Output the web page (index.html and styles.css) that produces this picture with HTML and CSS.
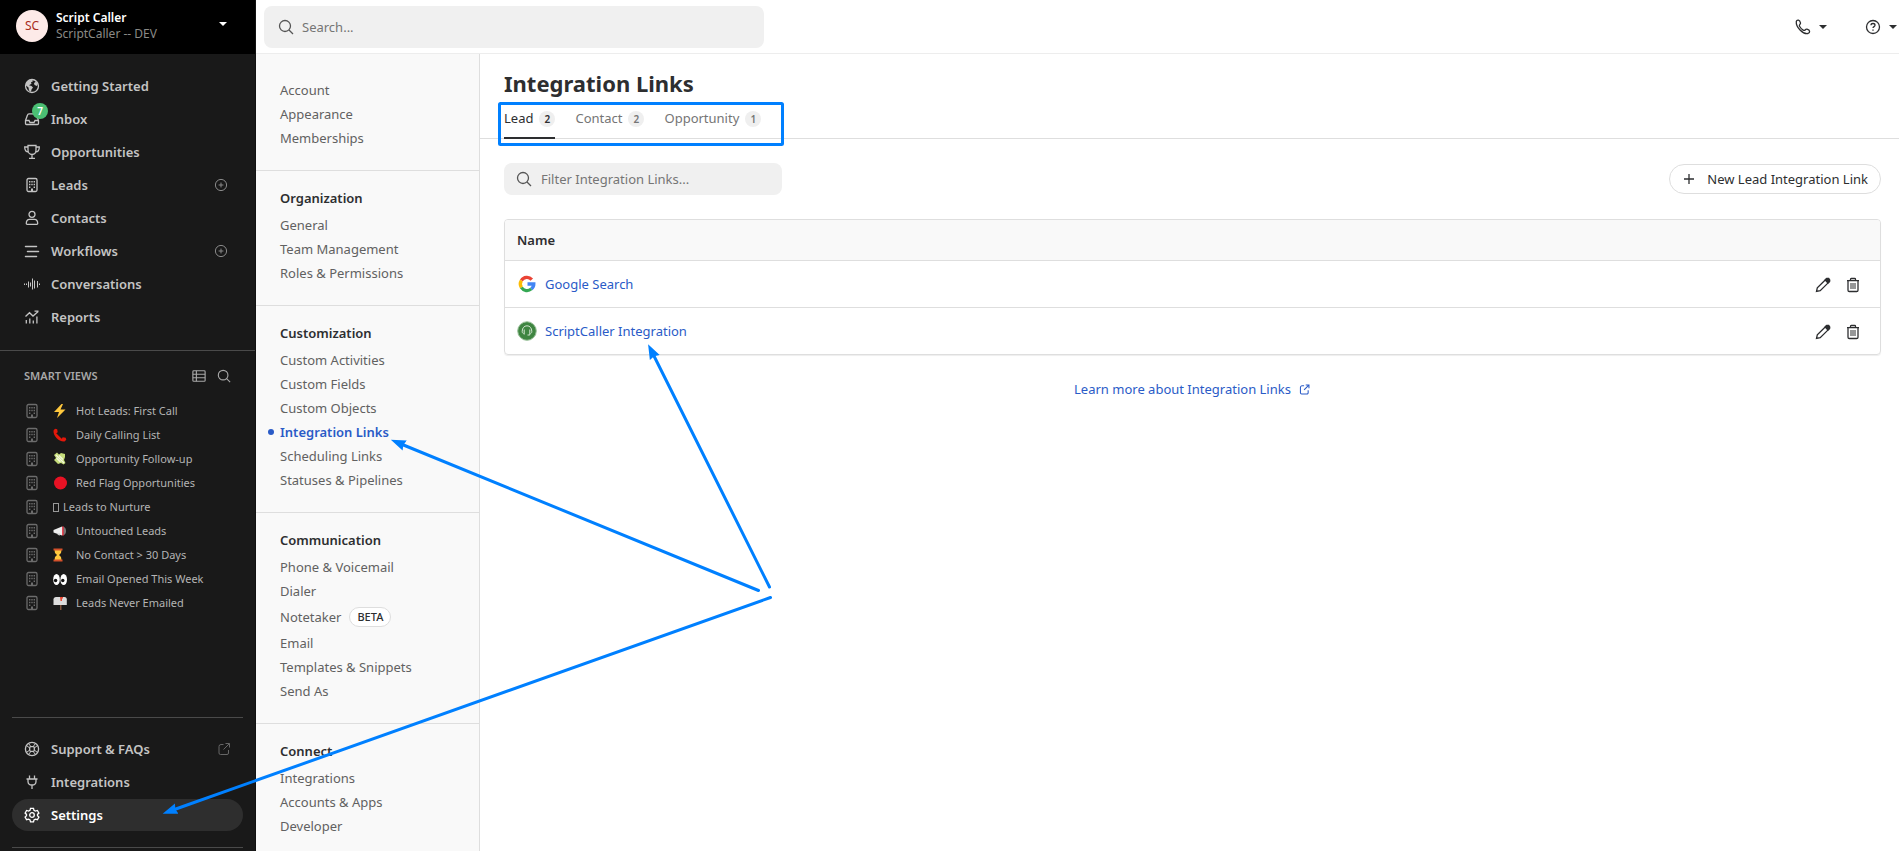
FILE: index.html
```html
<!DOCTYPE html>
<html lang="en">
<head>
    <meta charset="UTF-8">
    <meta name="viewport" content="width=device-width, initial-scale=1.0">
    <title>Integration Links</title>
    <link rel="stylesheet" href="styles.css">
</head>
<body>
    <!-- shared icons -->
    <svg class="sprite" aria-hidden="true">
        <symbol id="i-building" viewBox="0 0 16 16">
            <rect x="3" y="1.5" width="10" height="13" rx="1.5"/>
            <path d="M5 4h1.400v1.400H5zM7.300 4h1.400v1.400H7.300zM9.600 4H11v1.400H9.600zM5 6.800h1.400v1.400H5zM7.300 6.800h1.400v1.400H7.300zM9.600 6.800H11v1.400H9.600zM5 9.600h1.400V11H5zM9.600 9.600H11V11H9.600zM7 11.500h2v3H7z" fill="currentColor" stroke="none"/>
        </symbol>
        <symbol id="i-search" viewBox="0 0 16 16">
            <circle cx="7" cy="7" r="5.5"/>
            <path d="M11 11l4 4"/>
        </symbol>
        <symbol id="i-plus-circle" viewBox="0 0 16 16">
            <circle cx="8" cy="8" r="5.600"/>
            <path d="M8 5.600v4.800M5.600 8h4.800"/>
        </symbol>
        <symbol id="i-external" viewBox="0 0 16 16">
            <path d="M7.500 3.500H5a2 2 0 0 0-2 2V12a1.500 1.500 0 0 0 1.500 1.500H11a1.500 1.500 0 0 0 1.500-1.500V9M9.500 2.500h4v4M13.300 2.700L7.500 8.500"/>
        </symbol>
        <symbol id="i-pencil" viewBox="0 0 16 16">
            <path d="M1.500 14.500l.8-3.600L11 2.200a1.600 1.600 0 0 1 2.300 0l.6.6a1.600 1.600 0 0 1 0 2.300L5.200 13.700z"/>
            <path d="M10.200 3l1.500-1.500h2L14.700 3v1.300L13 6z" fill="currentColor"/>
        </symbol>
        <symbol id="i-trash" viewBox="0 0 16 16">
            <path d="M2 3.700h12M5.500 3.500V2.300c0-.5.300-.8.800-.8h3.400c.5 0 .8.300.8.800v1.200M3 4v9.200c0 .8.500 1.300 1.300 1.300h7.400c.8 0 1.300-.5 1.300-1.300V4"/>
            <path d="M6 6v6M8 6v6M10 6v6" stroke-width="1"/>
        </symbol>
    </svg>

    <div class="app">
        <aside class="sidebar">
            <button class="account" type="button">
                <span class="avatar">SC</span>
                <span class="account-text">
                    <strong>Script Caller</strong>
                    <span>ScriptCaller -- DEV</span>
                </span>
                <span class="caret"></span>
            </button>

            <nav class="main-nav">
                <a href="#"><svg class="icon" viewBox="0 0 16 16"><circle cx="8" cy="8" r="6.500"/><path d="M2 5l2.500-2.500L8 1.700l1 1.500-2 1 .5 1.500-2.500 1.500 2.500.8 1.500 1.500-1.500 2-.5 2.500-2-1.500-.5-3L2 7.500zM11 2.500l3 3-1 2.500-2.500-1-.5-2 1.500-1z" fill="currentColor" stroke="none"/></svg>Getting Started</a>
                <a href="#"><span class="icon-wrap"><svg class="icon" viewBox="0 0 16 16"><path d="M1.500 9.500L3.500 4c.2-.8.600-1.200 1.500-1.200h6c.8 0 1.200.4 1.500 1.200l2 5.500v3c0 .6-.4 1-1 1h-11c-.6 0-1-.4-1-1zM1.500 9.500h3.500l1 2h4l1-2h3.500"/></svg><span class="badge">7</span></span>Inbox</a>
                <a href="#"><svg class="icon" viewBox="0 0 16 16"><path d="M4 1.500h8v4.500c0 2.500-1.500 4.500-4 4.500S4 8.500 4 6zM8 10.500v3.500M5 14.300h6M4 3H.7c0 3 1.300 5 3.800 5M12 3h3.300c0 3-1.300 5-3.800 5"/></svg>Opportunities</a>
                <a href="#"><svg class="icon"><use href="#i-building"/></svg>Leads<svg class="icon end"><use href="#i-plus-circle"/></svg></a>
                <a href="#"><svg class="icon" viewBox="0 0 16 16"><circle cx="8" cy="4.300" r="3"/><path d="M2.300 13.500c0-2.500 1.200-4.200 3.200-4.200h5c2 0 3.200 1.700 3.200 4.200 0 .5-.3.800-.8.800H3.100c-.5 0-.8-.3-.8-.8z"/></svg>Contacts</a>
                <a href="#"><svg class="icon" viewBox="0 0 16 16"><path d="M1.500 3.500h11M3.500 8.500h11M1.500 13.500h11" stroke-width="1.500" stroke-linecap="round"/></svg>Workflows<svg class="icon end"><use href="#i-plus-circle"/></svg></a>
                <a href="#"><svg class="icon" viewBox="0 0 16 16"><path d="M.5 7.500v1.500M2.500 7.500v1.500M4.500 5.500v6M6.500 6.500v4M8.500 2.500v11M10.500 4.500v8M13.500 5v6.500M15.500 7.500v1.500" stroke-width="1"/></svg>Conversations</a>
                <a href="#"><svg class="icon" viewBox="0 0 16 16"><path d="M2.300 14.500v-3.500M5.800 14.500V9.500M9.300 14.500v-3M12.900 14.500V7.500M1.500 7.500l4-3.800 3.500 3.300 5.200-4.500M10.500 2.200h4"/></svg>Reports</a>
            </nav>

            <section class="smart-views">
                <header>
                    <h2>SMART VIEWS</h2>
                    <svg class="icon" viewBox="0 0 16 16"><rect x="1" y="2" width="14" height="12" rx="1"/><path d="M1 6h14M1 10h14M5 2v12"/></svg>
                    <svg class="icon"><use href="#i-search"/></svg>
                </header>
                <a href="#"><svg class="icon"><use href="#i-building"/></svg><svg class="emoji" viewBox="0 0 14 14"><path d="M8.500 0L1 8h5l-2 6L12.500 5.500h-5L10 0z" fill="#ffc83d"/></svg>Hot Leads: First Call</a>
                <a href="#"><svg class="icon"><use href="#i-building"/></svg><svg class="emoji" viewBox="0 0 14 14"><path d="M2 .8l2.200.5.500 3-1.500 1L8.700 10.800l1-1.500 3 .5.600 2-1.800 1.700C6 14 0 8 .5 2.500z" fill="#e3170a"/></svg>Daily Calling List</a>
                <a href="#"><svg class="icon"><use href="#i-building"/></svg><svg class="emoji" viewBox="0 0 14 14"><path d="M1 3l3-2.500 2 2L8 1l4 1v3l-1 3 1.500 3-2 1.500L8 11l-3 1-4-4 2-2z" fill="#c5dc7a"/><path d="M3 3l8 8M6 3.500l4 4M3.500 6l4 4" stroke="#f4f8df" stroke-width="1.200"/></svg>Opportunity Follow-up</a>
                <a href="#"><svg class="icon"><use href="#i-building"/></svg><svg class="emoji" viewBox="0 0 14 14"><circle cx="7.500" cy="7" r="6.500" fill="#e81224"/></svg>Red Flag Opportunities</a>
                <a href="#"><svg class="icon"><use href="#i-building"/></svg><span class="tofu"></span>Leads to Nurture</a>
                <a href="#"><svg class="icon"><use href="#i-building"/></svg><svg class="emoji" viewBox="0 0 14 14"><path d="M.5 6L9 2.500v9L.5 8.500z" fill="#eee"/><path d="M4 9.500h3v2L5 11z" fill="#ccc"/><path d="M9 2.500h1.800v9H9z" fill="#e84855"/><path d="M10.800 3c3 1 3 7 0 8z" fill="#777"/></svg>Untouched Leads</a>
                <a href="#"><svg class="icon"><use href="#i-building"/></svg><svg class="emoji" viewBox="0 0 14 14"><path d="M1.500 2h7L8 5 6 7l2 2 .5 3h-7L2 9l2-2-2-2z" fill="#ffc83d"/><path d="M.5.500h9v2h-9zM.5 11.500h9v2h-9z" fill="#d4512b"/></svg>No Contact &gt; 30 Days</a>
                <a href="#"><svg class="icon"><use href="#i-building"/></svg><svg class="emoji" viewBox="0 0 14 14"><ellipse cx="3.500" cy="7.500" rx="3.300" ry="5.500" fill="#fff"/><ellipse cx="10.700" cy="7.500" rx="3.300" ry="5.500" fill="#fff"/><circle cx="2.600" cy="8.500" r="1.700" fill="#111"/><circle cx="9.800" cy="8.500" r="1.700" fill="#111"/></svg>Email Opened This Week</a>
                <a href="#"><svg class="icon"><use href="#i-building"/></svg><svg class="emoji" viewBox="0 0 14 14"><path d="M.5 3.500C.5 2 1.500 1 3 1h8.500c1.500 0 2.300 1 2.300 2.500V9H.5z" fill="#ddd"/><path d="M7 9h1.500v5H7z" fill="#80533b"/><path d="M7 1h3v1.500H9V5H7.500z" fill="#e84a35"/></svg>Leads Never Emailed</a>
            </section>

            <nav class="main-nav bottom-nav">
                <a href="#"><svg class="icon" viewBox="0 0 16 16"><circle cx="8" cy="8" r="6.600"/><rect x="5.700" y="5.700" width="4.600" height="4.600" rx="1"/><path d="M2.800 4.800L5.800 7M4.800 2.800L7 5.800M13.200 4.800L10.200 7M11.200 2.800L9 5.800M2.800 11.200L5.800 9M4.800 13.200L7 10.200M13.200 11.200L10.200 9M11.200 13.200L9 10.200" stroke-width="1"/></svg>Support &amp; FAQs<svg class="icon end dim"><use href="#i-external"/></svg></a>
                <a href="#"><svg class="icon" viewBox="0 0 16 16"><path d="M5.500 1.500v3.500M10.500 1.500v3.500M2.500 5h11M4 5v2.500C4 10 5.500 11 8 11s4-1 4-3.500V5M8 11v4"/></svg>Integrations</a>
                <a href="#" class="active"><svg class="icon" viewBox="0 0 16 16"><path d="M6.500 1.300h3l.5 2 1.400.8 2-.6 1.500 2.600-1.400 1.300v1.400l1.400 1.300-1.500 2.600-2-.6-1.400.8-.5 2h-3l-.5-2-1.400-.8-2 .6-1.500-2.600 1.400-1.300V7.400L1.100 6.100l1.500-2.600 2 .6L6 3.300z"/><circle cx="8" cy="8" r="2.300"/></svg>Settings</a>
            </nav>
        </aside>

        <div class="page">
            <header class="topbar">
                <label class="search-box">
                    <svg class="icon"><use href="#i-search"/></svg>
                    <input type="text" placeholder="Search..." aria-label="Search">
                </label>
                <div class="top-actions">
                    <button type="button" aria-label="Phone"><svg class="icon" viewBox="0 0 16 16"><path d="M1.300 2.500C1.500 1.700 2.500 1 3.500 1.200c1 .2 1.700 1.500 2 2.600.2.900-.2 1.300-.8 1.800-.6.600-.4 1.200 0 1.900.8 1.400 2 2.700 3.500 3.600.7.400 1.400.5 1.900-.1.600-.7 1-1 1.900-.8 1.100.3 2.500 1 2.600 2 .1 1.100-.7 2-1.600 2.300C8 15.500.7 8 1.300 2.500z"/></svg><span class="caret"></span></button>
                    <button type="button" aria-label="Help"><svg class="icon" viewBox="0 0 16 16"><circle cx="8" cy="8" r="6.500"/><path d="M6 6.300c0-1.200.8-1.800 2-1.800s2 .7 2 1.700c0 1.400-2 1.400-2 2.800M8 10.500v1.300"/></svg><span class="caret"></span></button>
                </div>
            </header>

            <div class="body">
                <nav class="settings-nav">
                    <section>
                        <a href="#">Account</a>
                        <a href="#">Appearance</a>
                        <a href="#">Memberships</a>
                    </section>
                    <section>
                        <h3>Organization</h3>
                        <a href="#">General</a>
                        <a href="#">Team Management</a>
                        <a href="#">Roles &amp; Permissions</a>
                    </section>
                    <section>
                        <h3>Customization</h3>
                        <a href="#">Custom Activities</a>
                        <a href="#">Custom Fields</a>
                        <a href="#">Custom Objects</a>
                        <a href="#" class="active">Integration Links</a>
                        <a href="#">Scheduling Links</a>
                        <a href="#">Statuses &amp; Pipelines</a>
                    </section>
                    <section>
                        <h3>Communication</h3>
                        <a href="#">Phone &amp; Voicemail</a>
                        <a href="#">Dialer</a>
                        <a href="#" class="with-tag">Notetaker <span class="tag">BETA</span></a>
                        <a href="#">Email</a>
                        <a href="#">Templates &amp; Snippets</a>
                        <a href="#">Send As</a>
                    </section>
                    <section>
                        <h3>Connect</h3>
                        <a href="#">Integrations</a>
                        <a href="#">Accounts &amp; Apps</a>
                        <a href="#">Developer</a>
                    </section>
                </nav>

                <main>
                    <div class="heading">
                        <h1>Integration Links</h1>
                        <div class="tabs">
                            <a href="#" class="active">Lead <span>2</span></a>
                            <a href="#">Contact <span>2</span></a>
                            <a href="#">Opportunity <span>1</span></a>
                        </div>
                    </div>

                    <div class="content">
                        <div class="toolbar">
                            <label class="filter-box">
                                <svg class="icon"><use href="#i-search"/></svg>
                                <input type="text" placeholder="Filter Integration Links..." aria-label="Filter Integration Links">
                            </label>
                            <button type="button" class="new-btn"><svg class="icon" viewBox="0 0 16 16"><path d="M8 3v10M3 8h10"/></svg>New Lead Integration Link</button>
                        </div>

                        <div class="table-box">
                            <table>
                                <thead>
                                    <tr><th colspan="2">Name</th></tr>
                                </thead>
                                <tbody>
                                    <tr>
                                        <td><a href="#"><svg class="logo" viewBox="0 0 20 20"><g fill="none" stroke-width="3.300"><path d="M4.400 6.500A6.500 6.500 0 0 1 14.800 5.600" stroke="#ea4335"/><path d="M4.400 13.500A6.500 6.500 0 0 1 4.400 6.500" stroke="#fbbc05"/><path d="M14.300 14.900A6.500 6.500 0 0 1 4.400 13.500" stroke="#34a853"/><path d="M10.500 10h6.300c0 2-.9 3.800-2.500 4.900" stroke="#4285f4"/></g></svg>Google Search</a></td>
                                        <td class="actions">
                                            <button type="button" aria-label="Edit"><svg class="icon"><use href="#i-pencil"/></svg></button>
                                            <button type="button" aria-label="Delete"><svg class="icon"><use href="#i-trash"/></svg></button>
                                        </td>
                                    </tr>
                                    <tr>
                                        <td><a href="#"><svg class="logo" viewBox="0 0 20 20"><circle cx="10" cy="10" r="9.300" fill="#3f8541" stroke="#9cc29c"/><path d="M6.500 12.500c-.9-.2-1.300-.9-1.300-2.200C5.200 7 7.200 4.800 10 4.800s4.800 2.200 4.800 5.500c0 1.300-.4 2-1.300 2.200M7.200 8.500v5M12.800 8.500v5.500H10.500" fill="none" stroke="#d5e6d3"/></svg>ScriptCaller Integration</a></td>
                                        <td class="actions">
                                            <button type="button" aria-label="Edit"><svg class="icon"><use href="#i-pencil"/></svg></button>
                                            <button type="button" aria-label="Delete"><svg class="icon"><use href="#i-trash"/></svg></button>
                                        </td>
                                    </tr>
                                </tbody>
                            </table>
                        </div>

                        <p class="learn-more"><a href="#">Learn more about Integration Links <svg class="icon"><use href="#i-external"/></svg></a></p>
                    </div>
                </main>
            </div>
        </div>
    </div>

    <!-- blue callouts over the page -->
    <svg class="callouts" aria-hidden="true">
        <defs>
            <marker id="head" markerUnits="userSpaceOnUse" markerWidth="16" markerHeight="12" refX="4" refY="6" orient="auto">
                <path d="M15 6L0 .500L1.500 6L0 11.500z"/>
            </marker>
        </defs>
        <rect x="499.500" y="103.500" width="283" height="41" rx="1"/>
        <path class="arrow" d="M769.500 587L653 354"/>
        <path class="arrow" d="M758.500 590.500L401 444"/>
        <path class="arrow" d="M770.500 597.500L173 810"/>
    </svg>
</body>
</html>
```
FILE: styles.css
```css
* {
    box-sizing: border-box;
}

body {
    margin: 0;
    font-family: 'Noto Sans', 'Open Sans', sans-serif;
    font-size: 13px;
    line-height: 24px;
    color: #2d2e30;
    background: #fff;
    position: relative;
    overflow: hidden;
}

a {
    color: inherit;
    text-decoration: none;
}

button, input {
    font: inherit;
    color: inherit;
    border: none;
    background: none;
    padding: 0;
}

h1, h2, h3, p {
    margin: 0;
}

.sprite {
    display: none;
}

.icon {
    width: 16px;
    height: 16px;
    flex: none;
    fill: none;
    stroke: currentColor;
    stroke-width: 1.3;
}

.caret {
    border: 4px solid transparent;
    border-top-color: currentColor;
    border-bottom: none;
}

.app {
    display: flex;
    height: 100vh;
}

/* Sidebar */
.sidebar {
    width: 256px;
    flex: none;
    display: flex;
    flex-direction: column;
    background: #191919;
    border-right: 1px solid #111;
    color: #c4c4c4;
}

.account {
    height: 54px;
    flex: none;
    display: flex;
    align-items: center;
    gap: 8px;
    padding: 0 28px 2px 16px;
    background: #000;
    text-align: left;
}

.account .caret {
    margin-left: auto;
    margin-bottom: 4px;
    color: #fff;
}

.avatar {
    width: 32px;
    height: 32px;
    border-radius: 50%;
    background: #fdeae8;
    color: #a82a20;
    text-align: center;
    font-size: 12px;
    line-height: 32px;
}

.account-text {
    display: flex;
    flex-direction: column;
    font-size: 12px;
    line-height: 16px;
    color: #8a8a86;
}

.account-text strong {
    color: #fff;
    font-weight: 600;
}

.main-nav {
    display: flex;
    flex-direction: column;
    gap: 1px;
    padding: 16px 12px 17px;
    font-weight: 600;
}

.main-nav a {
    height: 32px;
    display: flex;
    align-items: center;
    gap: 11px;
    padding: 0 11px 0 12px;
    border-radius: 16px;
}

.main-nav .active {
    background: #2e2e2e;
    color: #fff;
}

.icon-wrap {
    display: flex;
    position: relative;
}

.badge {
    position: absolute;
    left: 8px;
    top: -8px;
    width: 16px;
    height: 16px;
    border-radius: 50%;
    background: #4bbf73;
    color: #fff;
    font-size: 10px;
    line-height: 16px;
    text-align: center;
}

.main-nav .end {
    margin-left: auto;
    margin-right: 3px;
    color: #8a8a8a;
    stroke-width: 1;
}

.main-nav .dim {
    margin-right: 0;
    color: #666;
}

.smart-views {
    border-top: 1px solid #4a4a4a;
    padding: 13px 24px 0;
    font-size: 11px;
    color: #b4b4b4;
}

.smart-views header {
    display: flex;
    align-items: center;
    gap: 11px;
    margin-bottom: 11px;
    color: #a8a8a8;
}

.smart-views h2 {
    flex: 1;
    font-size: 11px;
    font-weight: 600;
}

.smart-views header .icon {
    width: 14px;
    height: 14px;
}

.smart-views a {
    height: 24px;
    display: flex;
    align-items: center;
}

.smart-views a .icon {
    margin-right: 13px;
    color: #6c6c6c;
}

.emoji {
    width: 14px;
    height: 14px;
    margin-right: 9px;
}

.tofu {
    width: 6px;
    height: 9px;
    border: 1px solid #999;
    margin-right: 4px;
}

.bottom-nav {
    margin: auto 12px 3px;
    padding: 15px 0 16px;
    border-top: 1px solid #4a4a4a;
    border-bottom: 1px solid #4a4a4a;
}

/* Top bar */
.page {
    flex: 1;
    min-width: 0;
    display: flex;
    flex-direction: column;
}

.topbar {
    height: 54px;
    flex: none;
    display: flex;
    justify-content: space-between;
    align-items: center;
    padding: 0 2px 0 8px;
    border-bottom: 1px solid #ededed;
}

.search-box, .filter-box {
    display: flex;
    align-items: center;
    background: #f0f0f0;
    border-radius: 8px;
    color: #555;
}

.search-box {
    width: 500px;
    height: 42px;
    padding: 0 14px;
    gap: 8px;
}

.search-box input, .filter-box input {
    flex: 1;
    min-width: 0;
    outline: none;
}

input::placeholder {
    color: #757575;
    opacity: 1;
}

.top-actions {
    display: flex;
    gap: 38px;
}

.top-actions button {
    display: flex;
    align-items: center;
    gap: 8px;
}

/* Settings menu */
.body {
    flex: 1;
    min-height: 0;
    display: flex;
}

.settings-nav {
    width: 224px;
    flex: none;
    background: #f9f9f9;
    border-right: 1px solid #dedede;
    color: #616161;
    overflow: hidden;
}

.settings-nav section {
    padding: 15px 24px 20px;
    border-bottom: 1px solid #dedede;
}

.settings-nav section:first-child {
    padding-top: 24px;
}

.settings-nav section:last-child {
    border-bottom: none;
}

.settings-nav h3 {
    font-size: 13px;
    font-weight: 600;
    color: #2d2e30;
    margin-bottom: 3px;
}

.settings-nav a {
    display: block;
}

.settings-nav .active {
    position: relative;
    color: #2a5bc7;
    font-weight: 600;
}

.settings-nav .active::before {
    content: "";
    position: absolute;
    left: -12px;
    top: 9px;
    width: 6px;
    height: 6px;
    border-radius: 50%;
    background: #2a5bc7;
}

.settings-nav .with-tag {
    display: flex;
    align-items: center;
    gap: 8px;
    height: 28px;
}

.tag {
    padding: 0 7px;
    border: 1px solid #dedede;
    border-radius: 10px;
    background: #fff;
    color: #2d2e30;
    font-size: 11px;
    font-weight: 500;
    line-height: 18px;
}

/* Main area */
main {
    flex: 1;
    min-width: 0;
}

.heading {
    padding: 13px 24px 0;
    border-bottom: 1px solid #dedede;
}

h1 {
    font-size: 22px;
    font-weight: 700;
    line-height: 32px;
}

.tabs {
    display: flex;
    gap: 20px;
    padding-top: 7px;
    color: #757575;
}

.tabs a {
    height: 33px;
    display: flex;
    gap: 6px;
    align-items: flex-start;
    border-bottom: 2px solid transparent;
    margin-bottom: -1px;
}

.tabs span {
    width: 16px;
    height: 16px;
    margin-top: 5px;
    border-radius: 50%;
    background: #efefef;
    font-size: 10px;
    font-weight: 600;
    line-height: 16px;
    text-align: center;
}

.tabs .active {
    color: #2d2e30;
    border-color: #2d2e30;
}

.content {
    padding: 24px 18px 0 24px;
}

.toolbar {
    display: flex;
    justify-content: space-between;
    align-items: center;
    margin-bottom: 24px;
}

.filter-box {
    width: 278px;
    height: 32px;
    padding: 0 12px;
    gap: 9px;
}

.new-btn {
    height: 30px;
    display: flex;
    align-items: center;
    gap: 10px;
    padding: 0 12px 0 11px;
    border: 1px solid #dedede;
    border-radius: 15px;
}

.table-box {
    border: 1px solid #dedede;
    border-radius: 4px;
    overflow: hidden;
    box-shadow: 0 1px 1px #eee;
}

table {
    width: 100%;
    border-collapse: collapse;
}

th {
    height: 40px;
    padding: 0 12px;
    background: #f9f9f9;
    text-align: left;
    font-weight: 600;
}

td {
    height: 47px;
    padding: 0 12px;
    border-top: 1px solid #dedede;
}

td a {
    display: flex;
    align-items: center;
    gap: 8px;
    color: #2a5bc7;
}

.logo {
    width: 20px;
    height: 20px;
}

.actions {
    text-align: right;
    padding-right: 19px;
}

.actions button {
    width: 16px;
    height: 16px;
    margin-left: 11px;
    vertical-align: middle;
}

.actions .icon {
    display: block;
}

.learn-more {
    margin-top: 22px;
    text-align: center;
}

.learn-more a {
    display: inline-flex;
    align-items: center;
    gap: 7px;
    color: #2a5bc7;
}

.learn-more .icon {
    width: 13px;
    height: 13px;
}

/* Callouts */
.callouts {
    position: absolute;
    left: 0;
    top: 0;
    width: 800px;
    height: 840px;
    pointer-events: none;
    fill: none;
    stroke: #0080ff;
    stroke-width: 3;
    stroke-linecap: round;
}

.callouts .arrow {
    marker-end: url(#head);
}

.callouts marker path {
    fill: #0080ff;
    stroke: none;
}
```
